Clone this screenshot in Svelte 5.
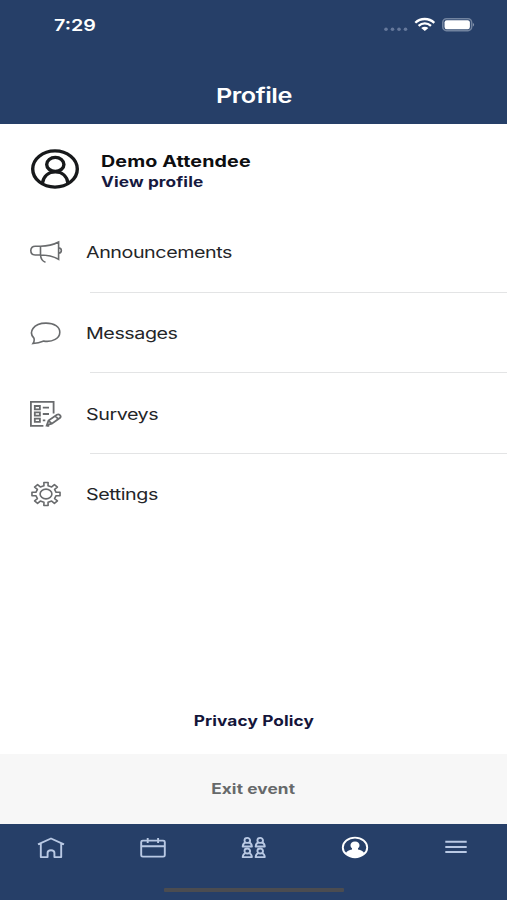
<script lang="ts">
  const items = [
    { key: "announcements", label: "Announcements" },
    { key: "messages", label: "Messages" },
    { key: "surveys", label: "Surveys" },
    { key: "settings", label: "Settings" },
  ];

  const tabs = ["home", "agenda", "people", "profile", "menu"];

  let activeTab = $state("profile");

  // outline of the settings cog, eight teeth
  function cogPath(cx: number, cy: number) {
    const points: string[] = [];
    for (let i = 0; i < 8; i++) {
      const mid = (i * Math.PI) / 4;
      for (const [r, offset] of [
        [10.3, -0.2],
        [14.2, -0.15],
        [14.2, 0.15],
        [10.3, 0.2],
      ]) {
        const x = cx + r * Math.cos(mid + offset);
        const y = cy + r * 0.82 * Math.sin(mid + offset);
        points.push(`${x.toFixed(2)} ${y.toFixed(2)}`);
      }
    }
    return `M${points.join("L")}Z`;
  }
</script>

<div class="screen">
  <header class="header">
    <div class="status-bar">
      <span class="time wide">7:29</span>
      <svg class="status-icons" width="92" height="18" viewBox="0 0 92 18">
        <g fill="#65789b">
          <circle cx="3" cy="13.2" r="1.8" />
          <circle cx="9.5" cy="13.2" r="1.8" />
          <circle cx="16" cy="13.2" r="1.8" />
          <circle cx="22.5" cy="13.2" r="1.8" />
        </g>
        <g fill="none" stroke="#fff" stroke-width="2.3">
          <path d="M32.3 6.8C37.5 1.7 46 1.7 51.3 6.8" />
          <path d="M35.6 9.8C39.2 6.5 44.4 6.5 48 9.8" />
        </g>
        <path d="M38.2 11.9Q41.8 9.4 45.4 11.9L41.8 15Z" fill="#fff" />
        <rect x="59.8" y="2.8" width="28.8" height="11.8" rx="3.6" fill="none" stroke="#71839f" stroke-width="1.6" />
        <rect x="61.5" y="4.2" width="25.4" height="9" rx="2.2" fill="#fff" />
        <path d="M89.8 6.7Q92.4 8.7 89.8 10.7Z" fill="#8796ae" />
      </svg>
    </div>
    <h1><span class="wide center">Profile</span></h1>
  </header>

  <main>
    <a class="user" href="#profile">
      <svg width="50" height="42" viewBox="0 0 50 42" fill="none" stroke="#17191b" stroke-width="3.4">
        <ellipse cx="25" cy="21" rx="22.3" ry="18.1" />
        <ellipse cx="25.3" cy="16.4" rx="8.6" ry="7" />
        <path d="M12.4 35.2C13.6 28.2 18.5 23.9 25.3 23.9S37 28.2 38 35.2" />
      </svg>
      <span class="user-text">
        <strong class="name wide">Demo Attendee</strong>
        <span class="view wide">View profile</span>
      </span>
    </a>

    <ul>
      {#each items as item (item.key)}
        <li>
          <svg class="item-icon" width="34" height="30" viewBox="0 0 34 30">
            {#if item.key === "announcements"}
              <path d="M11.5 9.2H6.2C3.5 9.2 1.8 11 1.8 13.6S3.5 18 6.2 18H11.5ZM11.5 9.2C18 9.2 24.5 7.7 29.6 5V22.3C24.5 19.5 18 18 11.5 18M11.5 18C11.8 22 13.4 24.3 16.5 25.2M29.8 10.8C33.2 11.3 33.2 15.8 29.8 16.3" />
            {:else if item.key === "messages"}
              <path d="M4 25.5C5.2 23.8 5.5 22 4.9 20.1C-.7 14.4 4 5.1 17 5.1C25.3 5.1 30.8 8.9 30.8 14.2C30.8 20.3 23.8 24.3 14.8 23.1C11.3 24.5 8.3 25.3 4 25.5Z" />
            {:else if item.key === "surveys"}
              <path d="M24.6 14.4V2.9H1.9V26.8H14.4M17.5 26.8H20.2" stroke-width="1.8" />
              <path d="M5.8 7H10.9V10.3H5.8ZM5.8 13.3H10.9V16.6H5.8ZM5.8 19.6H10.9V22.9H5.8ZM13.8 8.7H20M13.8 15H20M13.8 21.3H16.3" stroke-width="1.8" />
              <path d="M17.8 26.2L19.5 21.6L27.9 15.8C30.1 14.6 32.7 17 31.1 18.8L22.8 24.7ZM19.5 21.6L22.8 24.7M26.3 17.2L29.4 20.1" stroke-width="1.8" />
            {:else}
              <path d={cogPath(17, 15)} stroke-linejoin="round" />
              <ellipse cx="17" cy="15" rx="5.9" ry="4.9" />
            {/if}
          </svg>
          <span class="label wide">{item.label}</span>
        </li>
      {/each}
    </ul>

    <a class="privacy" href="#privacy"><span class="wide center">Privacy Policy</span></a>
  </main>

  <button class="exit" type="button"><span class="wide center">Exit event</span></button>

  <nav>
    {#each tabs as tab}
      <button type="button" aria-label={tab} class:active={tab === activeTab} onclick={() => (activeTab = tab)}>
        <svg width="30" height="26" viewBox="0 0 30 26">
          {#if tab === "home"}
            <path d="M2 9.4L15 3.5L28 9.4M4.8 8.3V22.1H11.6V17.8C11.6 14.4 18.4 14.4 18.4 17.8V22.1H25.2V8.3" />
          {:else if tab === "agenda"}
            <path d="M5.8 5.6H26.2Q27.8 5.6 27.8 7V20.2Q27.8 21.6 26.2 21.6H5.8Q4.2 21.6 4.2 20.2V7Q4.2 5.6 5.8 5.6ZM4.2 11.2H27.8M10.7 3V8M21.1 3V8" />
          {:else if tab === "people"}
            {#each [[9.3, 2.6], [22.2, 2.6], [9.3, 13.2], [22.2, 13.2]] as [x, y]}
              <g transform="translate({x} {y})">
                <ellipse cx="0" cy="2.8" rx="2.8" ry="2.5" />
                <path d="M-2 4.9C-3.6 5.5-4.3 6.5-4.6 8.9H4.6C4.3 6.5 3.6 5.5 2 4.9" />
              </g>
            {/each}
          {:else if tab === "profile"}
            <ellipse cx="15" cy="12.4" rx="12.2" ry="9.8" stroke-width="1.9" />
            <path
              class="solid"
              d="M15 6.5C18 6.5 19.7 8.2 19.5 10.5C19.4 11.9 18.8 12.6 18 13.3V14.4C20.9 15 23.2 16 24.2 18.2C21.8 20.9 18.5 22 15 22S8.2 20.9 5.8 18.2C6.8 16 9.1 15 12 14.4V13.3C11.2 12.6 10.6 11.9 10.5 10.5C10.3 8.2 12 6.5 15 6.5Z"
            />
          {:else}
            <path d="M4.3 6.7H25.7M4.3 11.9H25.7M4.3 17H25.7" stroke-width="2" />
          {/if}
        </svg>
      </button>
    {/each}
    <span class="home-indicator"></span>
  </nav>
</div>

<style>
  :global(body) {
    margin: 0;
  }

  .screen {
    display: flex;
    flex-direction: column;
    height: 900px;
    overflow: hidden;
    background: #fff;
    color: #242528;
    font-family: Inter, "Liberation Sans", sans-serif;
  }

  /* extended letterforms */
  .wide {
    display: inline-block;
    transform: scaleX(1.23);
    transform-origin: left center;
    white-space: nowrap;
  }

  .center {
    transform-origin: center;
  }

  .header {
    box-sizing: border-box;
    flex: none;
    height: 124px;
    background: #263f68;
    color: #fff;
  }

  .status-bar {
    display: flex;
    justify-content: space-between;
    align-items: center;
    height: 49px;
    padding: 0 32px 0 54px;
  }

  .time {
    font-size: 16px;
    font-weight: 600;
  }

  h1 {
    margin: 0;
    line-height: 93px;
    font-size: 20.5px;
    font-weight: 600;
    letter-spacing: -0.35px;
    text-align: center;
  }

  main {
    display: flex;
    flex: 1;
    flex-direction: column;
  }

  a {
    color: inherit;
    text-decoration: none;
  }

  .user {
    display: flex;
    align-items: center;
    gap: 20.5px;
    height: 88px;
    padding: 1px 0 0 30px;
    box-sizing: border-box;
  }

  .user-text {
    display: flex;
    flex-direction: column;
    align-items: flex-start;
    padding-top: 5px;
  }

  .name {
    color: #0d0e10;
    font-size: 16px;
    font-weight: 700;
    letter-spacing: 0.1px;
    line-height: 21px;
  }

  .view {
    color: #17193f;
    font-size: 14px;
    font-weight: 700;
    letter-spacing: 0.1px;
    line-height: 20px;
  }

  ul {
    margin: 0;
    padding: 0;
    list-style: none;
  }

  li {
    display: flex;
    align-items: center;
    gap: 22.8px;
    height: 80.7px;
    padding-left: 29px;
    background: linear-gradient(#e3e4e5, #e3e4e5) 90px 100% / 100% 1px no-repeat;
  }

  li:last-child {
    background: none;
  }

  .item-icon {
    flex: none;
    fill: none;
    stroke: #696b6d;
    stroke-width: 1.6;
  }

  .label {
    font-size: 16px;
    letter-spacing: -0.35px;
  }

  .privacy {
    margin-top: auto;
    padding-bottom: 22px;
    color: #14153a;
    font-size: 14px;
    font-weight: 700;
    letter-spacing: 0.1px;
    line-height: 22px;
    text-align: center;
  }

  button {
    padding: 0;
    border: 0;
    background: none;
    font: inherit;
    cursor: pointer;
  }

  .exit {
    flex: none;
    height: 70px;
    padding-bottom: 2px;
    background: #f7f7f7;
    color: #66696a;
    font-size: 14px;
    font-weight: 700;
    letter-spacing: 0.1px;
  }

  nav {
    position: relative;
    display: grid;
    grid-template-columns: repeat(5, 1fr);
    align-items: start;
    flex: none;
    height: 76px;
    background: #263f68;
  }

  nav button {
    display: flex;
    justify-content: center;
    padding-top: 11px;
  }

  nav svg {
    fill: none;
    stroke: #b9c9e4;
    stroke-width: 1.9;
    stroke-linejoin: round;
  }

  nav .active svg {
    stroke: #fff;
  }

  nav .solid {
    fill: #fff;
    stroke: none;
  }

  .home-indicator {
    position: absolute;
    bottom: 8px;
    left: 164px;
    width: 180px;
    height: 4px;
    border-radius: 1px;
    background: #4b4c50;
  }
</style>
